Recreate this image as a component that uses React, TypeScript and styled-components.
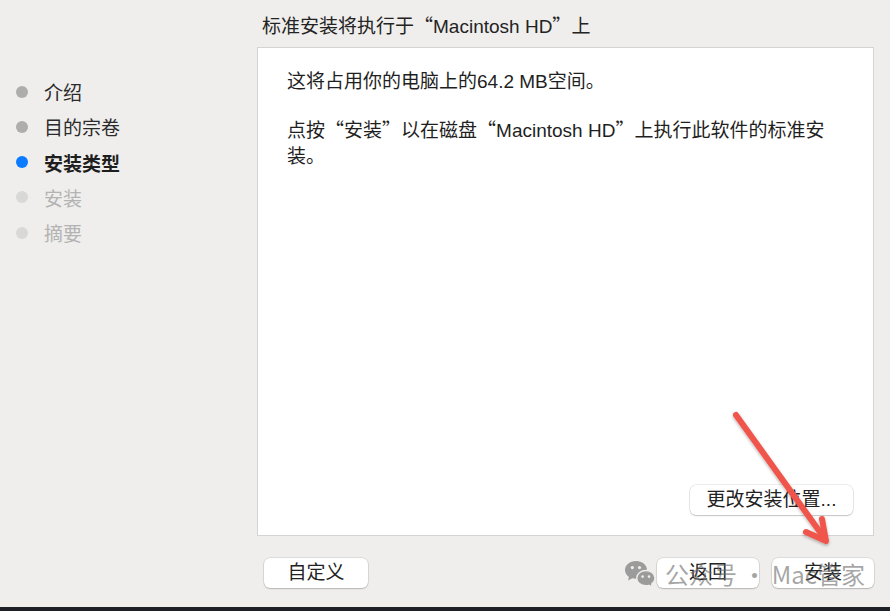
import React from "react";
import styled, { createGlobalStyle } from "styled-components";

const GlobalStyle = createGlobalStyle`
  html, body {
    margin: 0;
    padding: 0;
    background: #efeeec;
  }
  body {
    font-family: "Liberation Sans", "Noto Sans CJK SC", sans-serif;
    color: #262626;
  }
  * { box-sizing: border-box; }
`;

const Window = styled.div`
  position: relative;
  width: 890px;
  height: 611px;
  display: flex;
  flex-direction: column;
  background: #efeeec;
  overflow: hidden;
`;

const Main = styled.div`
  flex: 1;
  display: flex;
`;

const Sidebar = styled.ul`
  width: 257px;
  margin: 0;
  padding: 74px 0 0 16px;
  list-style: none;
`;

type StepState = "done" | "current" | "todo";

const dotColor: Record<StepState, string> = {
  done: "#adadad",
  current: "#0b7bff",
  todo: "#d8d8d8",
};

const textColor: Record<StepState, string> = {
  done: "#2b2b2b",
  current: "#1e1e1e",
  todo: "#b3b3b3",
};

const Step = styled.li<{ $state: StepState }>`
  height: 35.25px;
  display: flex;
  align-items: center;
  gap: 16px;
  font-size: 19px;
  font-family: "Noto Sans CJK SC", sans-serif;
  font-weight: ${(p) => (p.$state === "current" ? 700 : 400)};
  color: ${(p) => textColor[p.$state]};
`;

const Dot = styled.span<{ $state: StepState }>`
  width: 12px;
  height: 12px;
  border-radius: 50%;
  flex: none;
  background: ${(p) => dotColor[p.$state]};
`;

const Content = styled.div`
  flex: 1;
  display: flex;
  flex-direction: column;
  padding-right: 16px;
`;

const Title = styled.h1`
  height: 47px;
  margin: 0;
  padding: 12px 0 0 5px;
  font-size: 19px;
  font-weight: 400;
  line-height: 26px;
  color: #232323;
  white-space: nowrap;
`;

const Panel = styled.div`
  flex: 1;
  display: flex;
  flex-direction: column;
  background: #ffffff;
  border: 1px solid #d4d4d4;
  padding: 21px 20px 20px 29px;
`;

const Para = styled.p`
  margin: 0 0 21px 0;
  width: 545px;
  font-size: 19px;
  line-height: 26px;
  color: #1f1f1f;
`;

const Q = styled.span`
  font-family: "Noto Sans CJK SC", sans-serif;
`;

const PanelFooter = styled.div`
  margin-top: auto;
  display: flex;
  justify-content: flex-end;
`;

const Button = styled.button<{ $w: number }>`
  width: ${(p) => p.$w}px;
  height: 30px;
  padding: 0;
  border: none;
  border-radius: 6px;
  background: #ffffff;
  box-shadow: 0 0 0 0.5px rgba(0, 0, 0, 0.14), 0 1px 1.5px rgba(0, 0, 0, 0.18);
  font-family: "Liberation Sans", "Noto Sans CJK SC", sans-serif;
  font-size: 19px;
  line-height: 30px;
  color: #222222;
  white-space: nowrap;
`;

const ButtonBar = styled.div`
  height: 71px;
  display: flex;
  align-items: flex-start;
  justify-content: space-between;
  padding: 22px 0 0 7px;
`;

const ButtonGroup = styled.div`
  display: flex;
  gap: 13px;
`;

const Strip = styled.div`
  height: 4px;
  background: #1d2027;
`;

const Watermark = styled.div`
  position: absolute;
  left: 624px;
  top: 557px;
  display: flex;
  align-items: center;
  gap: 9px;
  pointer-events: none;
`;

const WatermarkText = styled.span`
  font-family: "Noto Sans CJK SC", sans-serif;
  font-size: 24px;
  line-height: 34px;
  color: rgba(105, 105, 105, 0.6);
  white-space: nowrap;
`;

const ArrowLayer = styled.svg`
  position: absolute;
  left: 0;
  top: 0;
  width: 890px;
  height: 611px;
  pointer-events: none;
`;

const steps: { label: string; state: StepState }[] = [
  { label: "介绍", state: "done" },
  { label: "目的宗卷", state: "done" },
  { label: "安装类型", state: "current" },
  { label: "安装", state: "todo" },
  { label: "摘要", state: "todo" },
];

const WeChatIcon = () => (
  <svg width="32" height="30" viewBox="0 0 32 30">
    <path
      d="M12 2C5.9 2 1 6 1 11c0 2.8 1.5 5.2 3.9 6.9L4 21.5l4.3-2.2c1.2.3 2.4.5 3.7.5 6.1 0 11-4 11-8.9S18.1 2 12 2z"
      fill="#9b9b9b"
    />
    <circle cx="8.3" cy="8.6" r="1.6" fill="#efeeec" />
    <circle cx="15.5" cy="8.6" r="1.6" fill="#efeeec" />
    <path
      d="M22 11.5c-5.2 0-9.3 3.4-9.3 7.6s4.1 7.6 9.3 7.6c1 0 2-.1 2.9-.4l3.6 1.9-.8-3.1c2-1.4 3.3-3.5 3.3-6 0-4.2-4.2-7.6-9-7.6z"
      fill="#9b9b9b"
      stroke="#efeeec"
      strokeWidth="1.4"
    />
    <circle cx="18.6" cy="17.6" r="1.3" fill="#efeeec" />
    <circle cx="25" cy="17.6" r="1.3" fill="#efeeec" />
  </svg>
);

export default function App() {
  return (
    <>
      <GlobalStyle />
      <Window>
        <Main>
          <Sidebar>
            {steps.map((s) => (
              <Step key={s.label} $state={s.state}>
                <Dot $state={s.state} />
                {s.label}
              </Step>
            ))}
          </Sidebar>
          <Content>
            <Title>
              标准安装将执行于<Q>“</Q>Macintosh HD<Q>”</Q>上
            </Title>
            <Panel>
              <Para>这将占用你的电脑上的64.2 MB空间。</Para>
              <Para>
                点按<Q>“</Q>安装<Q>”</Q>以在磁盘<Q>“</Q>Macintosh HD<Q>”</Q>
                上执行此软件的标准安装。
              </Para>
              <PanelFooter>
                <Button $w={163}>更改安装位置...</Button>
              </PanelFooter>
            </Panel>
            <ButtonBar>
              <Button $w={104}>自定义</Button>
              <ButtonGroup>
                <Button $w={102}>返回</Button>
                <Button $w={102}>安装</Button>
              </ButtonGroup>
            </ButtonBar>
          </Content>
        </Main>
        <Strip />
        <Watermark>
          <WeChatIcon />
          <WatermarkText>公众号 · Mac管家</WatermarkText>
        </Watermark>
        <ArrowLayer viewBox="0 0 890 611">
          <defs>
            <filter id="arrowShadow" x="-20%" y="-20%" width="140%" height="140%">
              <feDropShadow dx="0" dy="1.5" stdDeviation="1.5" floodColor="#000" floodOpacity="0.3" />
            </filter>
          </defs>
          <g
            filter="url(#arrowShadow)"
            stroke="#f0554c"
            strokeWidth="6"
            strokeLinecap="round"
            strokeLinejoin="round"
            fill="none"
          >
            <line x1="736" y1="415" x2="825" y2="539" />
            <polyline points="806,532 826,541 822,519" />
          </g>
        </ArrowLayer>
      </Window>
    </>
  );
}
